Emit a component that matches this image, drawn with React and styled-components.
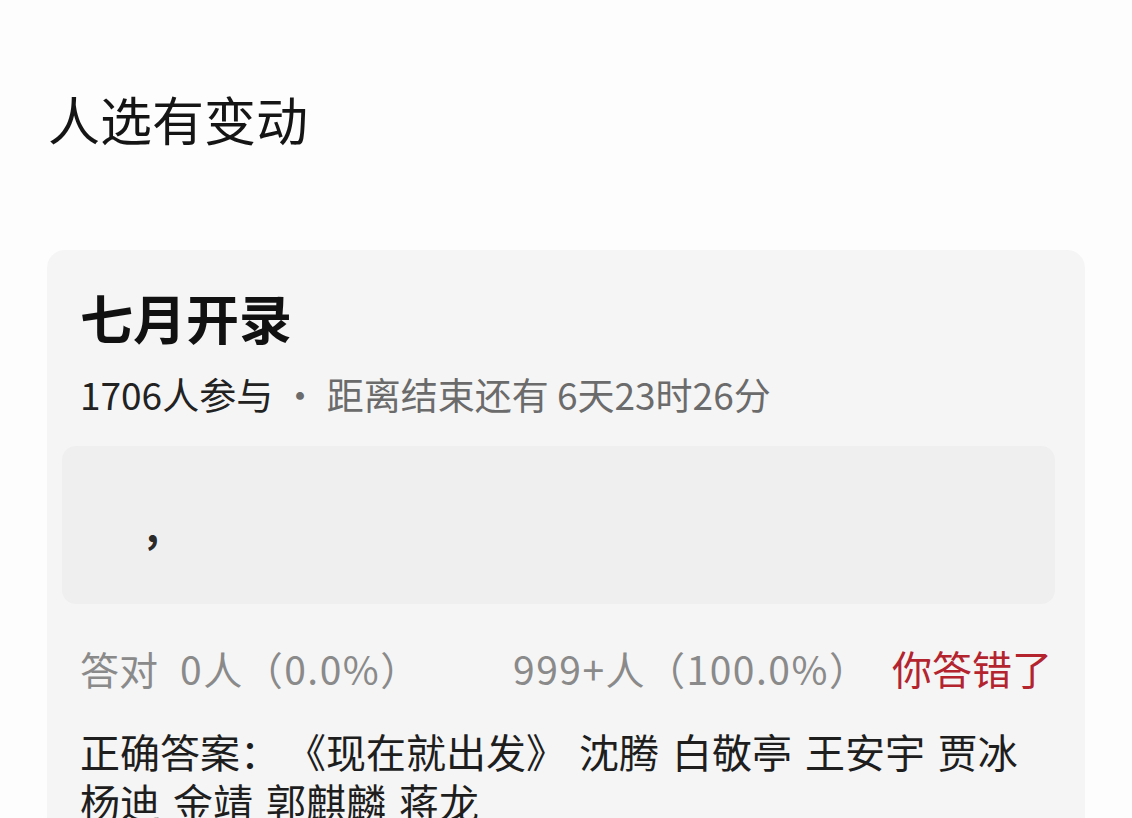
import styled, { createGlobalStyle } from 'styled-components';

const GlobalStyle = createGlobalStyle`
  html, body {
    margin: 0;
    padding: 0;
    background: #fdfdfd;
    overflow: hidden;
  }
  body {
    font-family: 'Noto Sans CJK SC', 'Noto Sans', sans-serif;
    color: #1c1c1c;
  }
`;

const Page = styled.div`
  width: 1132px;
  height: 818px;
  padding: 88px 47px 0 47px;
  box-sizing: border-box;
  overflow: hidden;
`;

const Heading = styled.h1`
  margin: 0 0 100px 1px;
  font-size: 52px;
  line-height: 62px;
  font-weight: 400;
  color: #151515;
`;

const Card = styled.section`
  width: 1038px;
  background: #f5f5f5;
  border-radius: 18px;
  padding: 36px 30px 40px 33px;
  box-sizing: border-box;
`;

const CardTitle = styled.h2`
  margin: 0;
  font-size: 53px;
  line-height: 62px;
  font-weight: 700;
  color: #111;
`;

const Meta = styled.div`
  margin-top: 21px;
  font-size: 37px;
  line-height: 50px;
  color: #6b6b6b;
`;

const Strong = styled.span`
  color: #222;
`;

const QuestionBox = styled.div`
  margin: 27px 0 0 -18px;
  height: 158px;
  background: #efefef;
  border-radius: 14px;
  display: flex;
  align-items: center;
  padding-left: 84px;
  font-size: 40px;
  font-weight: 700;
  color: #2a2a2a;
`;

const Stats = styled.div`
  margin-top: 38px;
  display: flex;
  align-items: baseline;
  font-size: 39px;
  line-height: 52px;
  color: #8a8a8a;
`;

const Stat = styled.span`
  width: ${({ $w }) => $w}px;
  white-space: nowrap;
  letter-spacing: 1.5px;
`;

const StatLabel = styled.span`
  margin-right: 22px;
  letter-spacing: 0;
`;

const Wrong = styled.span`
  color: #b3242f;
  font-size: 40px;
  white-space: nowrap;
`;

const Answer = styled.p`
  margin: 32px 0 0;
  font-size: 40px;
  line-height: 50px;
  color: #1e1e1e;
  white-space: nowrap;
  word-spacing: 4px;
`;

const AnswerLabel = styled.span`
  margin-right: 26px;
`;

export default function App() {
  return (
    <>
      <GlobalStyle />
      <Page>
        <Heading>人选有变动</Heading>
        <Card>
          <CardTitle>七月开录</CardTitle>
          <Meta>
            <Strong>1706人参与</Strong> · 距离结束还有 6天23时26分
          </Meta>
          <QuestionBox>,</QuestionBox>
          <Stats>
            <Stat $w={433}>
              <StatLabel>答对</StatLabel>0人（0.0%）
            </Stat>
            <Stat $w={379}>999+人（100.0%）</Stat>
            <Wrong>你答错了</Wrong>
          </Stats>
          <Answer>
            <AnswerLabel>正确答案：</AnswerLabel>《现在就出发》 沈腾 白敬亭 王安宇 贾冰
            <br />
            杨迪 金靖 郭麒麟 蒋龙
          </Answer>
        </Card>
      </Page>
    </>
  );
}
